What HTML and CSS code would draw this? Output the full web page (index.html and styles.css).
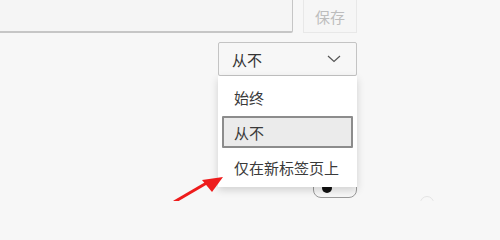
FILE: index.html
```html
<!DOCTYPE html>
<html lang="zh-CN">
<head>
<meta charset="utf-8">
<link rel="stylesheet" href="styles.css">
</head>
<body>
<div class="panel">
  <div class="row-top">
    <div class="field"></div>
    <button class="save">保存</button>
  </div>
  <div class="row-select">
    <div class="select">
      <span class="select-text">从不</span>
      <svg class="chev" width="14" height="8" viewBox="0 0 14 8"><path d="M1 1 L7 6.5 L13 1" fill="none" stroke="#555" stroke-width="1.2"/></svg>
      <div class="menu">
        <div class="item">始终</div>
        <div class="item item-active">从不</div>
        <div class="item">仅在新标签页上</div>
      </div>
    </div>
  </div>
  <div class="row-toggle">
    <div class="toggle"><span class="knob"></span></div>
  </div>
</div>
<span class="faint"></span>
<svg class="arrow" width="60" height="36" viewBox="0 0 60 36">
  <line x1="4" y1="37" x2="40" y2="16" stroke="#ee1c1c" stroke-width="3"/>
  <polygon points="53,12 32,15 42,27" fill="#ee1c1c"/>
</svg>
</body>
</html>
```
FILE: styles.css
```css
html {
  height: 201px;
  overflow: hidden;
}
html, body {
  margin: 0;
  padding: 0;
  background: #f7f7f7;
  font-family: "Noto Sans CJK SC", "Noto Sans", sans-serif;
  color: #333;
}
body {
  width: 500px;
  height: 201px;
  position: relative;
  overflow: hidden;
}
.panel {
  width: 357px;
  display: flex;
  flex-direction: column;
}
.row-top {
  display: flex;
  gap: 10px;
  height: 33px;
}
.field {
  flex: 1;
  background: #f5f5f5;
  border-right: 1px solid #c6c6c6;
  border-bottom: 2px solid #c6c6c6;
  border-bottom-right-radius: 2px;
}
.save {
  width: 54px;
  height: 33px;
  margin: 0;
  padding: 0;
  border: 1px solid #e8e8e8;
  border-top: none;
  background: #f6f6f6;
  color: #bdbdbd;
  font-family: inherit;
  font-size: 15px;
}
.row-select {
  display: flex;
  justify-content: flex-end;
  margin-top: 9px;
}
.select {
  position: relative;
  width: 139px;
  height: 34px;
  box-sizing: border-box;
  border: 1px solid #c4c4c4;
  border-radius: 2px;
  background: #f7f7f7;
  display: flex;
  align-items: center;
  justify-content: space-between;
  padding: 0 15px 0 13px;
  font-size: 15px;
  color: #333;
}
.chev {
  display: block;
}
.menu {
  position: absolute;
  top: 33px;
  left: -1px;
  width: 139px;
  box-sizing: border-box;
  padding: 5px 4px 4px;
  background: #fff;
  box-shadow: 0 3px 8px rgba(0, 0, 0, 0.16);
  display: flex;
  flex-direction: column;
  gap: 3px;
  z-index: 2;
}
.item {
  height: 32px;
  box-sizing: border-box;
  border: 2px solid transparent;
  padding-left: 10px;
  display: flex;
  align-items: center;
  font-size: 15px;
  color: #3a3a3a;
}
.item-active {
  border-color: #8c8c8c;
  background: #ebebeb;
  border-radius: 1px;
}
.row-toggle {
  display: flex;
  justify-content: flex-end;
  margin-top: 102px;
}
.toggle {
  width: 44px;
  height: 20px;
  box-sizing: border-box;
  border: 1px solid #9a9a9a;
  border-radius: 8px;
  background: #f7f7f7;
  display: flex;
  align-items: center;
  padding-left: 8px;
}
.knob {
  width: 10px;
  height: 10px;
  border-radius: 50%;
  background: #111;
}
.faint {
  position: absolute;
  left: 420px;
  top: 196px;
  width: 12px;
  height: 12px;
  border: 1px solid #e4e4e4;
  border-radius: 50%;
}
.arrow {
  position: absolute;
  left: 170px;
  top: 165px;
  z-index: 3;
}
```
